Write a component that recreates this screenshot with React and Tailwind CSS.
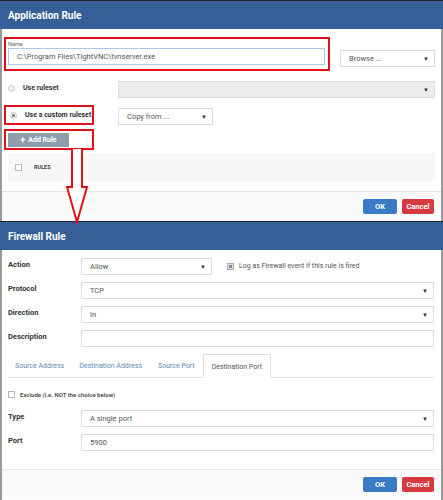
import React from 'react';

const Caret = () => <span className="text-[6px] text-[#333]">▼</span>;

const Select = ({ value, className = '', grey }) => (
    <div className={`flex h-[17px] items-center justify-between border border-[#dcdcdc] pl-[8px] pr-[5px] text-[7.5px] text-[#555] ${grey ? 'bg-[#ececec]' : 'bg-white'} ${className}`}>
        <span>{value}</span>
        <Caret />
    </div>
);

const Input = ({ value, className = '' }) => (
    <div className={`flex h-[17px] items-center border border-[#dcdcdc] bg-white pl-[8px] text-[7.5px] text-[#555] ${className}`}>{value}</div>
);

const Radio = ({ checked }) => (
    <span className="flex h-[7px] w-[7px] shrink-0 items-center justify-center rounded-full border border-[#c8c8c8] bg-[#eee]">
        {checked && <span className="h-[3px] w-[3px] rounded-full bg-[#777]" />}
    </span>
);

const Header = ({ title }) => (
    <div className="flex h-[29px] shrink-0 items-center border-t border-[#222] bg-[#355f96] pl-[8px] text-[10px] font-bold text-white">{title}</div>
);

const Footer = () => (
    <div className="flex h-[30px] shrink-0 items-center justify-end gap-[5px] border-t border-[#e3e3e3] bg-[#fafafa] pr-[7px]">
        <button className="h-[15px] w-[34px] rounded-[2px] bg-[#3b7bc6] text-[7.5px] font-bold text-white">OK</button>
        <button className="h-[15px] w-[32px] rounded-[2px] bg-[#d63a41] text-[7.5px] font-bold text-white">Cancel</button>
    </div>
);

const Row = ({ label, children, className = '' }) => (
    <div className={`flex items-start ${className}`}>
        <div className="w-[73px] pt-[1px] text-[7.5px] font-bold text-[#333]">{label}</div>
        {children}
    </div>
);

export default function App() {
    return (
        <div className="relative flex h-[500px] w-[443px] flex-col overflow-hidden bg-white" style={{ fontFamily: 'Roboto, "Liberation Sans", sans-serif' }}>
            {/* Application Rule */}
            <div className="flex h-[221px] shrink-0 flex-col">
                <Header title="Application Rule" />
                <div className="flex flex-1 flex-col border-x-2 border-[#9a9a9a] pt-[8px]">
                    <div className="flex items-end">
                        <div className="ml-[2px] h-[34px] w-[326px] border-2 border-[#e3101a] pl-[2px] pr-[3px] pt-[1px]">
                            <div className="h-[8px] text-[5.5px] leading-[8px] text-[#666]">Name</div>
                            <Input value={'C:\\Program Files\\TightVNC\\tvnserver.exe'} className="!border-[#a9cbe8]" />
                        </div>
                        <Select value="Browse ..." className="mb-[4px] ml-[10px] w-[95px]" />
                    </div>
                    <div className="mt-[10px] flex items-center">
                        <div className="-mt-[3px] flex w-[116px] items-center pl-[6px]">
                            <Radio />
                            <span className="ml-[8px] text-[7px] font-bold text-[#333]">Use ruleset</span>
                        </div>
                        <Select value="" grey className="w-[317px]" />
                    </div>
                    <div className="mt-[7px] flex items-end">
                        <div className="ml-[2px] flex h-[20px] w-[90px] items-center whitespace-nowrap border-2 border-[#e3101a] pl-[4px]">
                            <Radio checked />
                            <span className="ml-[8px] text-[7px] font-bold text-[#333]">Use a custom ruleset</span>
                        </div>
                        <Select value="Copy from ..." className="ml-[24px] w-[95px]" />
                    </div>
                    <div className="ml-[2px] mt-[4px] flex h-[21px] w-[90px] items-end border-2 border-[#e3101a] pb-[1px] pl-[2px]">
                        <div className="flex h-[14px] w-[61px] items-center justify-center gap-[3px] bg-[#8e9eac] text-[7px] font-bold text-white">
                            <span className="text-[9px] leading-none">+</span>
                            <span>Add Rule</span>
                        </div>
                    </div>
                    <div className="ml-[6px] mt-[3px] flex h-[28px] w-[427px] items-center bg-[#f7f7f7] pl-[7px]">
                        <span className="h-[7px] w-[7px] border border-[#bbb] bg-white" />
                        <span className="ml-[12px] text-[5.5px] font-bold text-[#444]">RULES</span>
                    </div>
                    <div className="flex-1" />
                    <Footer />
                </div>
            </div>

            {/* Firewall Rule */}
            <div className="flex flex-1 flex-col">
                <Header title="Firewall Rule" />
                <div className="flex flex-1 flex-col border-x-2 border-[#9a9a9a] pt-[8px]">
                    <div className="flex flex-col gap-[7px] pl-[6px] pr-[7px]">
                        <Row label="Action">
                            <Select value="Allow" className="w-[131px]" />
                            <div className="ml-[15px] flex h-[17px] items-center">
                                <span className="flex h-[7px] w-[7px] items-center justify-center border border-[#aaa] bg-[#ddd]">
                                    <span className="h-[3px] w-[3px] bg-[#888]" />
                                </span>
                                <span className="ml-[5px] text-[7px] text-[#555]">Log as Firewall event if this rule is fired</span>
                            </div>
                        </Row>
                        <Row label="Protocol">
                            <Select value="TCP" className="flex-1" />
                        </Row>
                        <Row label="Direction">
                            <Select value="In" className="flex-1" />
                        </Row>
                        <Row label="Description">
                            <Input value="" className="flex-1" />
                        </Row>
                    </div>
                    <div className="ml-[6px] mr-[6px] mt-[7px] flex h-[24px] items-stretch border-b border-[#e0e0e0] text-[7px]">
                        <span className="flex items-center pl-[7px] pt-[2px] text-[#5b87b8]">Source Address</span>
                        <span className="ml-[15px] flex items-center pt-[2px] text-[#5b87b8]">Destination Address</span>
                        <span className="ml-[16px] flex items-center pt-[2px] text-[#5b87b8]">Source Port</span>
                        <span className="-mb-[1px] ml-[8px] flex items-center border border-b-white border-[#ddd] bg-white px-[8px] pt-[2px] text-[#555]">Destination Port</span>
                    </div>
                    <div className="ml-[6px] mt-[12px] flex items-center">
                        <span className="h-[7px] w-[7px] border border-[#bbb] bg-white" />
                        <span className="ml-[5px] text-[6px] font-bold text-[#555]">Exclude (i.e. NOT the choice below)</span>
                    </div>
                    <div className="mt-[11px] flex flex-col gap-[7px] pl-[6px] pr-[7px]">
                        <Row label="Type">
                            <Select value="A single port" className="flex-1" />
                        </Row>
                        <Row label="Port">
                            <Input value="5900" className="flex-1" />
                        </Row>
                    </div>
                    <div className="flex-1" />
                    <div className="mb-[1px]">
                        <Footer />
                    </div>
                </div>
            </div>

            {/* red arrow overlay */}
            <svg className="pointer-events-none absolute left-0 top-0" width="443" height="500">
                <path d="M72 149 L72 187 L67 187 L77 222 L87 187 L82 187 L82 149" fill="white" stroke="#e3101a" strokeWidth="2" strokeLinejoin="miter" />
            </svg>
        </div>
    );
}
